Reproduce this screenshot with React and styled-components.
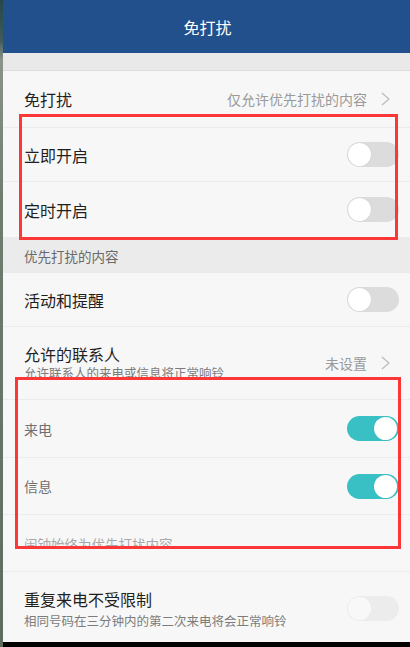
import React from "react";
import styled, { createGlobalStyle, css } from "styled-components";

const Global = createGlobalStyle`
  html, body { margin: 0; padding: 0; }
  body {
    width: 410px; height: 647px; overflow: hidden;
    font-family: "Noto Sans CJK SC", "Noto Sans", sans-serif;
    background: #000;
  }
`;

const Screen = styled.div`
  position: relative;
  display: flex;
  width: 410px;
  height: 647px;
`;

const Strip = styled.div`
  width: 3px;
  flex: none;
  background: linear-gradient(#27474a 0px, #3f5a58 40px, #8a938a 60px, #6f7d6f 200px, #5e6c60 647px);
`;

const Main = styled.div`
  flex: 1;
  display: flex;
  flex-direction: column;
  background: #f7f7f7;
`;

const Header = styled.div`
  height: 53px;
  flex: none;
  background: #22508c;
  color: #fff;
  font-size: 16px;
  display: flex;
  align-items: center;
  justify-content: center;
  padding-left: 2px;
`;

const Band = styled.div`
  height: ${(p) => p.h}px;
  flex: none;
  background: #e9e9e9;
  border-bottom: 1px solid #dcdcdc;
`;

const Row = styled.div`
  height: ${(p) => p.h}px;
  flex: none;
  box-sizing: border-box;
  display: flex;
  align-items: ${(p) => p.align || "center"};
  padding: ${(p) => p.pad || "0"};
  padding-left: 21px;
  padding-right: 11px;
  border-bottom: ${(p) => (p.sep ? "1px solid #ececec" : "none")};
`;

const Texts = styled.div`
  flex: 1;
  display: flex;
  flex-direction: column;
  gap: ${(p) => p.gap || 0}px;
`;

const Title = styled.div`
  font-size: 16px;
  line-height: 22px;
  color: ${(p) => (p.small ? "#6f6f6f" : "#1f1f1f")};
  ${(p) =>
    p.small &&
    css`
      font-size: 14px;
    `}
`;

const Sub = styled.div`
  font-size: 12.5px;
  line-height: 16px;
  color: #7c7c7c;
  ${(p) =>
    p.clip &&
    css`
      height: ${p.clip}px;
      overflow: hidden;
    `}
`;

const Note = styled.div`
  font-size: 13.5px;
  line-height: 18px;
  color: #a8a8a8;
  height: 12px;
  overflow: hidden;
`;

const SectionHead = styled.div`
  height: 36px;
  flex: none;
  box-sizing: border-box;
  background: #ebebeb;
  padding-left: 21px;
  display: flex;
  align-items: center;
  font-size: 13.5px;
  color: #6a6a6a;
  padding-top: 1px;
`;

const Detail = styled.div`
  display: flex;
  align-items: center;
  gap: 14px;
  margin-right: 9px;
  font-size: 14px;
  color: #9a9a9a;
`;

const Track = styled.div`
  position: relative;
  width: 52px;
  height: 25px;
  border-radius: 13px;
  flex: none;
  background: ${(p) => (p.on ? "#38c0c5" : p.disabled ? "#ececec" : "#dcdcdc")};
`;

const Knob = styled.div`
  position: absolute;
  top: 1px;
  ${(p) => (p.on ? "right: 2px;" : "left: 1px;")}
  width: 23px;
  height: 23px;
  border-radius: 50%;
  background: ${(p) => (p.disabled ? "#f8f8f8" : "#fff")};
  box-shadow: ${(p) => (p.disabled ? "none" : "0 0 1px rgba(0,0,0,0.15)")};
`;

const Bottom = styled.div`
  height: 5px;
  flex: none;
  background: #000;
`;

const Mark = styled.div`
  position: absolute;
  left: ${(p) => p.x}px;
  top: ${(p) => p.y}px;
  width: ${(p) => p.w}px;
  height: ${(p) => p.h}px;
  box-sizing: border-box;
  border: 3px solid #fb3737;
  pointer-events: none;
`;

const Toggle = ({ on, disabled }) => (
  <Track on={on} disabled={disabled}>
    <Knob on={on} disabled={disabled} />
  </Track>
);

const Chevron = () => (
  <svg width="9" height="14" viewBox="0 0 9 14">
    <polyline points="1,1 8,7 1,13" fill="none" stroke="#b9b9b9" strokeWidth="1.2" />
  </svg>
);

export default function App() {
  return (
    <>
      <Global />
      <Screen>
        <Strip />
        <Main>
          <Header>免打扰</Header>
          <Band h={17} />
          <Row h={57} sep>
            <Texts>
              <Title>免打扰</Title>
            </Texts>
            <Detail>
              <span>仅允许优先打扰的内容</span>
              <Chevron />
            </Detail>
          </Row>
          <Row h={54} sep>
            <Texts>
              <Title>立即开启</Title>
            </Texts>
            <Toggle />
          </Row>
          <Row h={55}>
            <Texts>
              <Title>定时开启</Title>
            </Texts>
            <Toggle />
          </Row>
          <SectionHead>优先打扰的内容</SectionHead>
          <Row h={54} sep>
            <Texts>
              <Title>活动和提醒</Title>
            </Texts>
            <Toggle />
          </Row>
          <Row h={73} sep align="flex-start" pad="16px 0 0">
            <Texts>
              <Title>允许的联系人</Title>
              <Sub clip={12}>允许联系人的来电或信息将正常响铃</Sub>
            </Texts>
            <Detail style={{ alignSelf: "center", marginTop: "-16px" }}>
              <span>未设置</span>
              <Chevron />
            </Detail>
          </Row>
          <Row h={58} sep>
            <Texts>
              <Title small>来电</Title>
            </Texts>
            <Toggle on />
          </Row>
          <Row h={57} sep>
            <Texts>
              <Title small>信息</Title>
            </Texts>
            <Toggle on />
          </Row>
          <Row h={57} sep align="flex-start" pad="20px 0 0">
            <Texts>
              <Note>闹钟始终为优先打扰内容</Note>
            </Texts>
          </Row>
          <Row h={70} pad="3px 0 0">
            <Texts gap={3}>
              <Title>重复来电不受限制</Title>
              <Sub>相同号码在三分钟内的第二次来电将会正常响铃</Sub>
            </Texts>
            <Toggle disabled />
          </Row>
          <Bottom />
        </Main>
        <Mark x={19} y={114} w={379} h={126} />
        <Mark x={15} y={377} w={386} h={172} />
      </Screen>
    </>
  );
}
